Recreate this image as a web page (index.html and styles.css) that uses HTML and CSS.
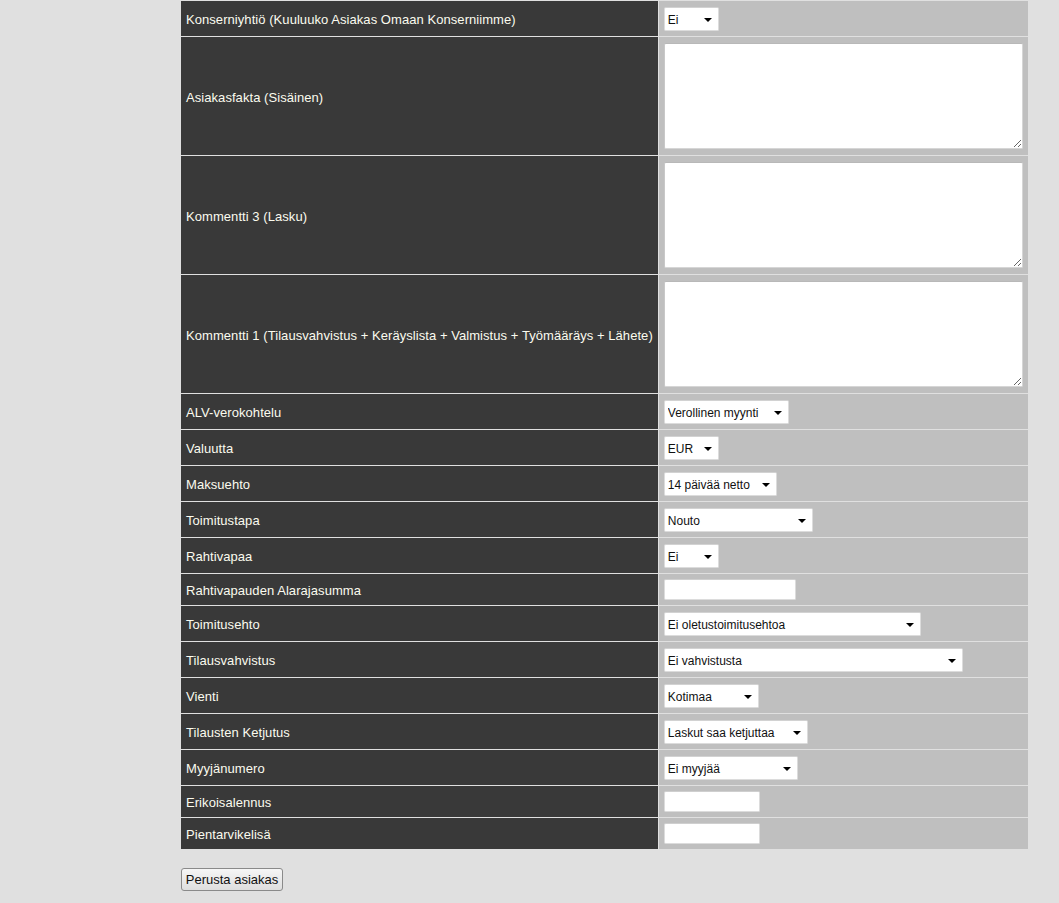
FILE: index.html
```html
<!DOCTYPE html>
<html lang="fi">
<head>
<meta charset="utf-8">
<title>Perusta asiakas</title>
<link rel="stylesheet" href="styles.css">
</head>
<body>
<div class="page">
<table class="form">
  <tr class="r-sel"><td class="lbl">Konserniyhtiö (Kuuluuko Asiakas Omaan Konserniimme)</td><td class="val"><span class="sel w55"><select><option>Ei</option></select></span></td></tr>
  <tr class="r-txt"><td class="lbl">Asiakasfakta (Sisäinen)</td><td class="val"><textarea></textarea></td></tr>
  <tr class="r-txt"><td class="lbl">Kommentti 3 (Lasku)</td><td class="val"><textarea></textarea></td></tr>
  <tr class="r-txt"><td class="lbl">Kommentti 1 (Tilausvahvistus + Keräyslista + Valmistus + Työmääräys + Lähete)</td><td class="val"><textarea></textarea></td></tr>
  <tr class="r-sel"><td class="lbl">ALV-verokohtelu</td><td class="val"><span class="sel w125"><select><option>Verollinen myynti</option></select></span></td></tr>
  <tr class="r-sel"><td class="lbl">Valuutta</td><td class="val"><span class="sel w55"><select><option>EUR</option></select></span></td></tr>
  <tr class="r-sel"><td class="lbl">Maksuehto</td><td class="val"><span class="sel w113"><select><option>14 päivää netto</option></select></span></td></tr>
  <tr class="r-sel"><td class="lbl">Toimitustapa</td><td class="val"><span class="sel w149"><select><option>Nouto</option></select></span></td></tr>
  <tr class="r-sel"><td class="lbl">Rahtivapaa</td><td class="val"><span class="sel w55"><select><option>Ei</option></select></span></td></tr>
  <tr class="r-inp"><td class="lbl">Rahtivapauden Alarajasumma</td><td class="val"><input type="text" class="inp w132"></td></tr>
  <tr class="r-sel"><td class="lbl">Toimitusehto</td><td class="val"><span class="sel w257"><select><option>Ei oletustoimitusehtoa</option></select></span></td></tr>
  <tr class="r-sel"><td class="lbl">Tilausvahvistus</td><td class="val"><span class="sel w299"><select><option>Ei vahvistusta</option></select></span></td></tr>
  <tr class="r-sel"><td class="lbl">Vienti</td><td class="val"><span class="sel w95"><select><option>Kotimaa</option></select></span></td></tr>
  <tr class="r-sel"><td class="lbl">Tilausten Ketjutus</td><td class="val"><span class="sel w144"><select><option>Laskut saa ketjuttaa</option></select></span></td></tr>
  <tr class="r-sel"><td class="lbl">Myyjänumero</td><td class="val"><span class="sel w134"><select><option>Ei myyjää</option></select></span></td></tr>
  <tr class="r-inp"><td class="lbl">Erikoisalennus</td><td class="val"><input type="text" class="inp w96"></td></tr>
  <tr class="r-inp"><td class="lbl">Pientarvikelisä</td><td class="val"><input type="text" class="inp w96"></td></tr>
</table>
<div class="actions"><button type="button" class="btn">Perusta asiakas</button></div>
</div>
</body>
</html>
```
FILE: styles.css
```css
html, body {
  margin: 0;
  padding: 0;
  background: #e0e0e0;
  font-family: "Liberation Sans", Arial, sans-serif;
  font-size: 13px;
}
.page {
  padding-left: 180px;
}
.form {
  border-collapse: separate;
  border-spacing: 1px;
  width: 848px;
  background: #e0e0e0;
}
.form td {
  padding: 0 5px;
  vertical-align: middle;
}
.form .lbl {
  background: #393939;
  color: #fbfbef;
  width: 469px;
  font-size: 13px;
  letter-spacing: 0.06px;
  white-space: nowrap;
  padding-top: 2px;
}
.form .val {
  background: #bfbfbf;
}
.r-sel td { height: 33px; }
.r-txt td { height: 116px; }
.r-inp td { height: 29px; }

.sel {
  position: relative;
  display: inline-block;
  vertical-align: middle;
  margin-top: 1px;
}
.sel select {
  -webkit-appearance: none;
  appearance: none;
  display: block;
  width: 100%;
  height: 24px;
  box-sizing: border-box;
  border: 1px solid #dcdcdc;
  border-top-color: #d2d2d2;
  border-radius: 2px;
  background: #fff;
  color: #111;
  font-family: "Liberation Sans", Arial, sans-serif;
  font-size: 12px;
  padding: 1px 16px 0 3px;
  margin: 0;
  outline: none;
}
.sel::after {
  content: "";
  position: absolute;
  right: 7px;
  top: 11px;
  width: 0;
  height: 0;
  border-left: 4px solid transparent;
  border-right: 4px solid transparent;
  border-top: 4px solid #000;
  pointer-events: none;
}
.w55 { width: 55px; }
.w95 { width: 95px; }
.w113 { width: 113px; }
.w125 { width: 125px; }
.w134 { width: 134px; }
.w144 { width: 144px; }
.w149 { width: 149px; }
.w257 { width: 257px; }
.w299 { width: 299px; }

textarea {
  display: block;
  box-sizing: border-box;
  width: 359px;
  height: 106px;
  margin: 0;
  border: 1px solid #d6d6d6;
  border-top-color: #b8b8b8;
  border-left-color: #c8c8c8;
  border-radius: 2px;
  background: #fff;
  font-family: "Liberation Sans", Arial, sans-serif;
  font-size: 12px;
}
.inp {
  display: block;
  box-sizing: border-box;
  height: 21px;
  margin: 0;
  border: 1px solid #dcdcdc;
  border-top-color: #cfcfcf;
  border-radius: 2px;
  background: #fff;
  font-family: "Liberation Sans", Arial, sans-serif;
  font-size: 12px;
  padding: 0 3px;
}
.inp.w132 { width: 132px; }
.inp.w96 { width: 96px; }

.actions {
  padding: 18px 0 0 1px;
}
.btn {
  box-sizing: border-box;
  width: 102px;
  height: 23px;
  margin: 0;
  padding: 0;
  border: 1px solid #8a8a8a;
  border-radius: 3px;
  background: linear-gradient(#f6f6f6, #dedede);
  color: #111;
  font-family: "Liberation Sans", Arial, sans-serif;
  font-size: 13px;
}
```
